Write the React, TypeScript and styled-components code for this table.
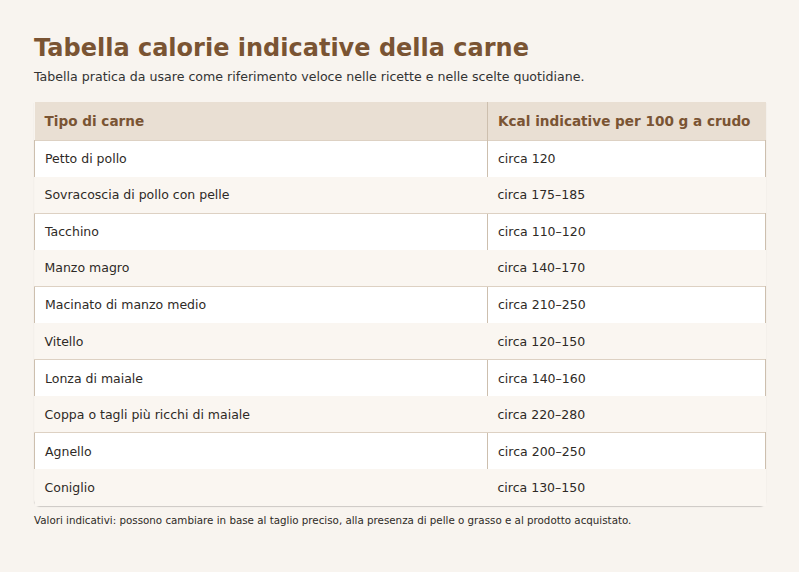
import React from "react";
import styled, { createGlobalStyle } from "styled-components";

const Global = createGlobalStyle`
  html, body { margin: 0; padding: 0; background: #f8f4ef; }
  body { font-family: "DejaVu Sans", "Liberation Sans", sans-serif; }
`;

const Page = styled.main`
  padding: 32px 34px 20px 34px;
  color: #2e2a26;
`;

const Title = styled.h1`
  margin: 0;
  font-size: 24px;
  line-height: 32px;
  font-weight: 700;
  color: #7a5433;
`;

const Subtitle = styled.p`
  margin: 4px 0 16px;
  font-size: 12.6px;
  line-height: 18px;
  color: #333;
`;

const Table = styled.table`
  width: 731px;
  table-layout: fixed;
  border-collapse: collapse;
  border-radius: 0 0 6px 6px;
  box-shadow: 0 1px 1px rgba(0, 0, 0, 0.18);
  font-size: 12.5px;
`;

const HeadCell = styled.th<{ $w: number; $divider?: boolean }>`
  box-sizing: border-box;
  width: ${(p) => p.$w}px;
  height: 38px;
  padding: 0 10px;
  text-align: left;
  background: #e9dfd3;
  color: #7a5433;
  font-size: 13.6px;
  font-weight: 700;
  border-left: ${(p) => (p.$divider ? "1px solid #cdbfae" : "none")};
`;

const Row = styled.tr<{ $alt: boolean }>`
  background: ${(p) => (p.$alt ? "#faf6f1" : "#ffffff")};
  height: 36.6px;
`;

const Cell = styled.td<{ $bordered: boolean; $first: boolean }>`
  padding: 0 10px;
  color: #2e2a26;
  border-top: ${(p) => (p.$bordered ? "1px solid #ddd1c3" : "none")};
  border-left: ${(p) => (p.$bordered ? "1px solid #cdbfae" : "none")};
  border-right: ${(p) => (p.$bordered && !p.$first ? "1px solid #cdbfae" : "none")};
`;

const Note = styled.p`
  margin: 7px 0 0;
  font-size: 10.3px;
  line-height: 14px;
  color: #2e2a26;
`;

const rows: [string, string][] = [
  ["Petto di pollo", "circa 120"],
  ["Sovracoscia di pollo con pelle", "circa 175–185"],
  ["Tacchino", "circa 110–120"],
  ["Manzo magro", "circa 140–170"],
  ["Macinato di manzo medio", "circa 210–250"],
  ["Vitello", "circa 120–150"],
  ["Lonza di maiale", "circa 140–160"],
  ["Coppa o tagli più ricchi di maiale", "circa 220–280"],
  ["Agnello", "circa 200–250"],
  ["Coniglio", "circa 130–150"],
];

export default function App() {
  return (
    <>
      <Global />
      <Page>
        <Title>Tabella calorie indicative della carne</Title>
        <Subtitle>
          Tabella pratica da usare come riferimento veloce nelle ricette e nelle scelte quotidiane.
        </Subtitle>
        <Table>
          <thead>
            <tr>
              <HeadCell $w={453}>Tipo di carne</HeadCell>
              <HeadCell $w={278} $divider>
                Kcal indicative per 100 g a crudo
              </HeadCell>
            </tr>
          </thead>
          <tbody>
            {rows.map(([name, kcal], i) => {
              const alt = i % 2 === 1;
              return (
                <Row key={name} $alt={alt}>
                  <Cell $bordered={!alt} $first>
                    {name}
                  </Cell>
                  <Cell $bordered={!alt} $first={false}>
                    {kcal}
                  </Cell>
                </Row>
              );
            })}
          </tbody>
        </Table>
        <Note>
          Valori indicativi: possono cambiare in base al taglio preciso, alla presenza di pelle o grasso e al prodotto acquistato.
        </Note>
      </Page>
    </>
  );
}
